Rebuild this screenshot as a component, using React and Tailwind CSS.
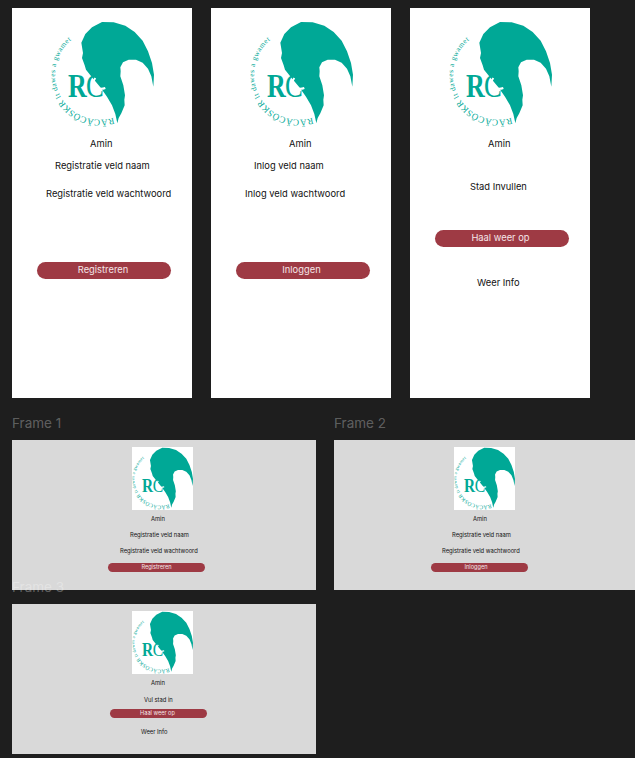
import React from "react";

const Logo = ({ className, arcId }) => (
  <svg viewBox="117 39 309 318" className={className}>
    <defs>
      <path id={arcId} d="M 304 329 A 135 135 0 0 1 195 84" fill="none" />
    </defs>
    <text transform="translate(168 267) scale(0.78 1)" fontFamily="'Liberation Serif', serif" fontSize="100" fontWeight="bold" fill="#00a896">
      R
    </text>
    <text transform="translate(222 267) scale(0.8 1)" fontFamily="'Liberation Serif', serif" fontSize="100" fill="#00a896">
      C
    </text>
    <path
      fill="#00a896"
      d="M270 42 L305 43 L340 53 L368 72 L392 98 L408 130 L420 165 L426 200 L424 236 L418 205 L408 182 L392 164 L372 155 L350 155 L333 163 L325 178 L326 190 L325 205 L334 232 L339 262 L337 275 L338 292 L328 316 L320 330 L316 346 L310 318 L300 292 L285 266 L265 238 L240 208 L222 185 L218 172 L210 150 L213 135 L208 104 L220 78 L240 58 Z"
    />
    <path fill="none" stroke="#ffffff" strokeWidth="6" d="M250 210 Q238 226 252 238 Q264 246 280 240" />
    <text fontFamily="'Liberation Serif', serif" fill="#00a896">
      <textPath href={`#${arcId}`}>
        <tspan fontSize="27" letterSpacing="1">RÄCÄCÖSKR</tspan>
        <tspan fontSize="22" letterSpacing="1.6"> It dawes a gwamet</tspan>
      </textPath>
    </text>
  </svg>
);

const Label = ({ className, children }) => (
  <div className={`text-[9.35px] leading-[12px] text-[#111111] whitespace-nowrap ${className}`}>{children}</div>
);

const SmallLabel = ({ className, children }) => (
  <div className={`text-[5.8px] leading-[8px] text-[#111111] whitespace-nowrap ${className}`}>{children}</div>
);

const Pill = ({ className, children }) => (
  <div className={`w-[134px] h-[17px] rounded-full bg-[#9e3a44] flex items-center justify-center text-[9.35px] text-[#f5e6e8] ${className}`}>
    {children}
  </div>
);

const SmallPill = ({ className, children }) => (
  <div className={`w-[97px] h-[9px] rounded-full bg-[#9e3a44] flex items-center justify-center text-[5.6px] text-[#f5e6e8] ${className}`}>
    {children}
  </div>
);

const Phone = ({ id, className, children }) => (
  <div className={`absolute top-[8px] w-[180px] h-[390px] bg-white flex flex-col items-start pt-[13px] ${className}`}>
    <Logo arcId={id} className="ml-[39px] w-[103px] h-[106px] shrink-0" />
    <Label className="ml-[78px] mt-[11px]">Amin</Label>
    {children}
  </div>
);

const Frame = ({ id, className, children }) => (
  <div className={`absolute w-[304px] h-[150px] bg-[#d9d9d9] flex flex-col items-start pt-[7px] ${className}`}>
    <div className="ml-[120px] w-[61px] h-[63px] bg-white shrink-0">
      <Logo arcId={id} className="w-full h-full" />
    </div>
    <SmallLabel className="ml-[139px] mt-[5px]">Amin</SmallLabel>
    {children}
  </div>
);

const FrameTitle = ({ className, children }) => (
  <div className={`absolute text-[13.5px] leading-[17px] text-white/30 ${className}`}>{children}</div>
);

export default function App() {
  return (
    <div className="relative w-[635px] h-[758px] overflow-hidden bg-[#1e1e1e] font-['Inter',sans-serif]">
      <Phone id="arc-a" className="left-[12px]">
        <Label className="ml-[43px] mt-[10px]">Registratie veld naam</Label>
        <Label className="ml-[34px] mt-[16px]">Registratie veld wachtwoord</Label>
        <Pill className="ml-[25px] mt-[62px] pr-[2px]">Registreren</Pill>
      </Phone>
      <Phone id="arc-b" className="left-[211px]">
        <Label className="ml-[43px] mt-[10px]">Inlog veld naam</Label>
        <Label className="ml-[34px] mt-[16px]">Inlog veld wachtwoord</Label>
        <Pill className="ml-[25px] mt-[62px] pr-[3px]">Inloggen</Pill>
      </Phone>
      <Phone id="arc-c" className="left-[410px]">
        <Label className="ml-[60px] mt-[31px]">Stad Invullen</Label>
        <Pill className="ml-[25px] mt-[37px] pr-[3px]">Haal weer op</Pill>
        <Label className="ml-[67px] mt-[30px]">Weer Info</Label>
      </Phone>

      <FrameTitle className="left-[12px] top-[415px]">Frame 1</FrameTitle>
      <FrameTitle className="left-[334px] top-[415px]">Frame 2</FrameTitle>

      <Frame id="arc-d" className="left-[12px] top-[440px]">
        <SmallLabel className="ml-[118px] mt-[8px]">Registratie veld naam</SmallLabel>
        <SmallLabel className="ml-[108px] mt-[8px]">Registratie veld wachtwoord</SmallLabel>
        <SmallPill className="ml-[96px] mt-[8px]">Registreren</SmallPill>
      </Frame>
      <Frame id="arc-e" className="left-[334px] top-[440px]">
        <SmallLabel className="ml-[118px] mt-[8px]">Registratie veld naam</SmallLabel>
        <SmallLabel className="ml-[108px] mt-[8px]">Registratie veld wachtwoord</SmallLabel>
        <SmallPill className="ml-[97px] mt-[8px] pr-[7px]">Inloggen</SmallPill>
      </Frame>
      <Frame id="arc-f" className="left-[12px] top-[604px]">
        <SmallLabel className="ml-[132px] mt-[9px]">Vul stad in</SmallLabel>
        <SmallPill className="ml-[98px] mt-[5px] pr-[2px]">Haal weer op</SmallPill>
        <SmallLabel className="ml-[129px] mt-[10px]">Weer Info</SmallLabel>
      </Frame>

      <FrameTitle className="left-[12px] top-[579px]">Frame 3</FrameTitle>
    </div>
  );
}
